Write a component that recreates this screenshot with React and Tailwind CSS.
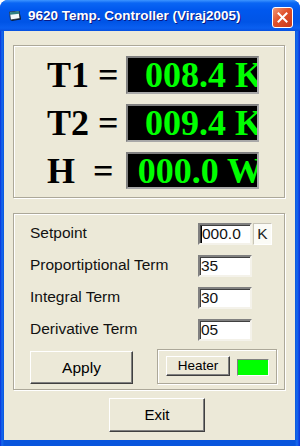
export default function App() {
  const disp = [
    { label: "T1 =", value: "008.4 K", h: "h-[38px]" },
    { label: "T2 =", value: "009.4 K", h: "h-[38px]" },
    { label: "H  =", value: "000.0 W", h: "h-[37px]" },
  ];
  const rows = [
    { label: "Setpoint", value: "000.0", unit: true },
    { label: "Proportiptional Term", value: "35" },
    { label: "Integral Term", value: "30" },
    { label: "Derivative Term", value: "05" },
  ];
  const raised =
    "border border-t-white border-l-white border-r-[#404040] border-b-[#404040] shadow-[inset_-1px_-1px_0_#808080] bg-[#ece9d8] flex items-center justify-center text-black";
  return (
    <div className="w-[300px] h-[446px] bg-white font-['Liberation_Sans',Arial,sans-serif]">
      <div className="w-full h-full flex flex-col rounded-t-[8px] overflow-hidden bg-[linear-gradient(to_right,#0831d9_0px,#166aee_2px,#0855dd_4px,#0855dd_295px,#166aee_297px,#0831d9_300px)]">
        {/* Title bar */}
        <div className="h-[31px] shrink-0 flex items-center relative bg-[linear-gradient(to_bottom,#3d95ff_0px,#0a66f4_3px,#0058ee_10px,#0054e6_22px,#0a5ff0_28px,#0650e0_31px)]">
          <svg className="ml-[9px] mt-[1px]" width="14" height="11" viewBox="0 0 14 11">
            <path d="M1 1.5 L10.5 0.5 L12 8.5 L2.5 10 Z" fill="#0a1a30" />
            <path d="M0.5 1 L10 0 L11 7.5 L1.5 9 Z" fill="#f4f8f8" stroke="#1a2a3a" strokeWidth="0.8" />
            <path d="M0.8 1.2 L10 0.3 L10.3 2.8 L1.1 3.8 Z" fill="#2f7f80" />
          </svg>
          <span className="ml-[5px] text-white font-bold text-[13.5px] leading-none [text-shadow:1px_1px_0_#0a1883] whitespace-pre">
            9620 Temp. Controller (Viraj2005)
          </span>
          <div className="absolute left-[272px] top-[7px] w-[21px] h-[21px] rounded-[3px] border border-white bg-[linear-gradient(135deg,#f09878_0%,#e0502a_45%,#c83a1a_100%)] flex items-center justify-center">
            <svg width="11" height="11" viewBox="0 0 11 11">
              <path d="M1.5 1.5 L9.5 9.5 M9.5 1.5 L1.5 9.5" stroke="white" strokeWidth="2" strokeLinecap="square" />
            </svg>
          </div>
        </div>

        {/* Client area */}
        <div className="flex-1 ml-[4px] mr-[5px] mb-[6px] bg-[#ece9d8] flex flex-col">
          {/* Display group */}
          <div className="ml-[9px] mt-[14px] w-[272px] h-[153px] border border-[#aca899] shadow-[1px_1px_0_white,inset_1px_1px_0_white] flex flex-col gap-[10px] pt-[10px]">
            {disp.map((d) => (
              <div key={d.label} className={`flex items-center ${d.h}`}>
                <div className="w-[112px] pl-[33px] text-[36px] font-bold leading-none text-black font-['Liberation_Serif','Times_New_Roman',serif] whitespace-pre">
                  {d.label}
                </div>
                <div className={`w-[133px] ${d.h} bg-black border-2 border-t-[#808080] border-l-[#808080] border-b-[#a8a8a8] border-r-[#a8a8a8] overflow-hidden flex items-center justify-end`}>
                  <span className="mr-[-6px] text-[36px] font-bold leading-none text-[#00ff00] font-['Liberation_Serif','Times_New_Roman',serif] whitespace-pre">
                    {d.value}
                  </span>
                </div>
              </div>
            ))}
          </div>

          {/* Parameters group */}
          <div className="ml-[9px] mt-[15px] w-[272px] h-[177px] border border-[#aca899] shadow-[1px_1px_0_white,inset_1px_1px_0_white] flex flex-col pt-[9px]">
            <div className="flex flex-col gap-[10px]">
              {rows.map((r) => (
                <div key={r.label} className="flex items-center h-[22px]">
                  <div className="w-[184px] pl-[16px] text-[15.5px] leading-none text-[#111] mt-[-2px] whitespace-pre">
                    {r.label}
                  </div>
                  <div className="w-[54px] h-[22px] bg-white border-2 border-t-[#808080] border-l-[#808080] border-b-[#f4f2ea] border-r-[#f4f2ea] shadow-[inset_1px_1px_0_#404040] flex items-center text-[15.5px] leading-none text-[#111] pl-[1px]">
                    {r.unit && <span className="w-[1px] h-[17px] bg-black" />}
                    <span>{r.value}</span>
                  </div>
                  {r.unit && (
                    <div className="ml-[1px] w-[19px] h-[22px] bg-[#fbfbf6] border border-t-[#c8c5b8] border-l-[#c8c5b8] border-b-white border-r-white flex items-center justify-center text-[15.5px] leading-none text-[#222]">
                      K
                    </div>
                  )}
                </div>
              ))}
            </div>
            <div className="flex items-start mt-[8px]">
              <div className={`ml-[16px] mt-[2px] w-[103px] h-[33px] text-[15.5px] ${raised}`}>Apply</div>
              <div className="ml-[24px] w-[120px] h-[35px] border border-[#aca899] shadow-[1px_1px_0_white,inset_1px_1px_0_white] flex items-end pl-[8px] pb-[7px] gap-[7px]">
                <div className={`w-[64px] h-[20px] text-[13.5px] ${raised}`}>Heater</div>
                <div className="w-[32px] h-[17px] bg-[#00ff00] border border-t-[#808080] border-l-[#808080] border-b-white border-r-white" />
              </div>
            </div>
          </div>

          {/* Exit */}
          <div className={`ml-[105px] mt-[8px] w-[96px] h-[34px] text-[15px] ${raised}`}>Exit</div>
        </div>
      </div>
    </div>
  );
}
